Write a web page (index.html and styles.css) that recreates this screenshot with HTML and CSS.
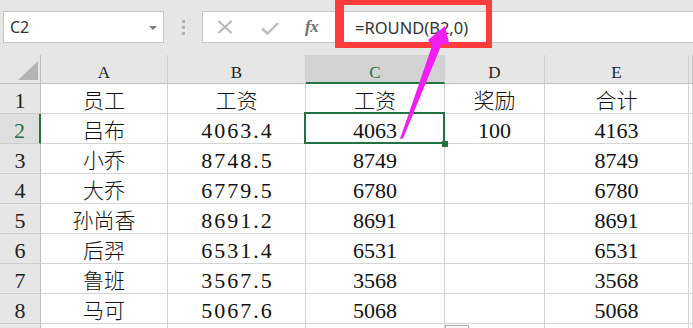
FILE: index.html
```html
<!DOCTYPE html>
<html lang="zh-CN">
<head>
<meta charset="utf-8">
<title>Excel ROUND</title>
<link rel="stylesheet" href="styles.css">
</head>
<body>
<div class="app">
  <div class="toolbar">
    <div class="namebox"><span class="ref">C2</span><span class="caret"></span></div>
    <div class="grip"><i></i><i></i><i></i></div>
    <div class="fbar">
      <svg class="ico-x" width="16" height="14" viewBox="0 0 16 14"><path d="M1.5 1 L14.5 13 M14.5 1 L1.5 13" stroke="#b4b4b4" stroke-width="1.8" fill="none"/></svg>
      <svg class="ico-ok" width="18" height="13" viewBox="0 0 18 13"><path d="M1 6.5 L6.5 11.5 L17 1" stroke="#bcbcbc" stroke-width="2.4" fill="none"/></svg>
      <span class="ico-fx">fx</span>
      <span class="formula">=ROUND(B2,0)</span>
    </div>
  </div>

  <div class="sheet">
    <div class="hd corner"><span class="tri"></span></div>
    <div class="hd col">A</div>
    <div class="hd col">B</div>
    <div class="hd col sel">C</div>
    <div class="hd col">D</div>
    <div class="hd col">E</div>
    <div class="hd col"></div>

    <div class="hd row">1</div>
    <div class="c zh">员工</div><div class="c zh">工资</div><div class="c zh">工资</div><div class="c zh">奖励</div><div class="c zh">合计</div><div class="c"></div>

    <div class="hd row sel">2</div>
    <div class="c zh">吕布</div><div class="c mono">4063.4</div><div class="c num active">4063</div><div class="c num">100</div><div class="c num">4163</div><div class="c"></div>

    <div class="hd row">3</div>
    <div class="c zh">小乔</div><div class="c mono">8748.5</div><div class="c num">8749</div><div class="c"></div><div class="c num">8749</div><div class="c"></div>

    <div class="hd row">4</div>
    <div class="c zh">大乔</div><div class="c mono">6779.5</div><div class="c num">6780</div><div class="c"></div><div class="c num">6780</div><div class="c"></div>

    <div class="hd row">5</div>
    <div class="c zh">孙尚香</div><div class="c mono">8691.2</div><div class="c num">8691</div><div class="c"></div><div class="c num">8691</div><div class="c"></div>

    <div class="hd row">6</div>
    <div class="c zh">后羿</div><div class="c mono">6531.4</div><div class="c num">6531</div><div class="c"></div><div class="c num">6531</div><div class="c"></div>

    <div class="hd row">7</div>
    <div class="c zh">鲁班</div><div class="c mono">3567.5</div><div class="c num">3568</div><div class="c"></div><div class="c num">3568</div><div class="c"></div>

    <div class="hd row">8</div>
    <div class="c zh">马可</div><div class="c mono">5067.6</div><div class="c num">5068</div><div class="c"></div><div class="c num">5068</div><div class="c"></div>

    <div class="hd row"></div>
    <div class="c"></div><div class="c"></div><div class="c"></div><div class="c"></div><div class="c"></div><div class="c"></div>
  </div>

  <div class="redbox"></div>
  <div class="autofill"></div>
  <svg class="arrow" width="693" height="328" viewBox="0 0 693 328">
    <polygon points="445,26 449.5,45 442,43.5 403,138.5 400,139 432,46 428,40" fill="#f01ef0"/>
  </svg>
</div>
</body>
</html>
```

FILE: styles.css
```css
html, body {
  margin: 0;
  padding: 0;
  background: #ffffff;
  overflow: hidden;
}

.app {
  position: relative;
  width: 693px;
  height: 328px;
  overflow: hidden;
}

/* ---------- toolbar ---------- */
.toolbar {
  height: 55px;
  box-sizing: border-box;
  background: #e6e6e6;
  display: flex;
  align-items: flex-start;
  padding-top: 11px;
}

.namebox {
  margin-left: 3px;
  width: 161px;
  height: 32px;
  box-sizing: border-box;
  background: #ffffff;
  border: 1px solid #c6c6c6;
  display: flex;
  align-items: center;
  justify-content: space-between;
  padding: 0 6px 0 6px;
  font-family: "Noto Sans", "Open Sans", sans-serif;
  font-size: 16px;
  color: #333333;
}

.caret {
  width: 0;
  height: 0;
  border-left: 4px solid transparent;
  border-right: 4px solid transparent;
  border-top: 4px solid #7a7a7a;
  margin-top: 1px;
}

.grip {
  margin-left: 18px;
  padding-top: 9px;
  display: flex;
  flex-direction: column;
  gap: 3px;
}

.grip i {
  display: block;
  width: 3px;
  height: 3px;
  background: #b0b0b0;
}

.fbar {
  margin-left: 17px;
  flex: 1;
  height: 32px;
  box-sizing: border-box;
  background: #ffffff;
  border: 1px solid #c6c6c6;
  border-right: none;
  display: flex;
  align-items: center;
}

.ico-x {
  margin-left: 14px;
  flex: none;
}

.ico-ok {
  margin-left: 28px;
  margin-top: 2px;
  flex: none;
}

.ico-fx {
  margin-left: 26px;
  width: 18px;
  font-family: "Liberation Serif", serif;
  font-style: italic;
  font-weight: bold;
  font-size: 17px;
  color: #6e6e6e;
  letter-spacing: -0.5px;
}

.formula {
  margin-left: 32px;
  font-family: "Noto Sans", "Open Sans", sans-serif;
  font-size: 16.5px;
  color: #333333;
}

/* ---------- sheet ---------- */
.sheet {
  display: grid;
  grid-template-columns: 41px 127px 138px 139px 100px 144px 1fr;
  grid-template-rows: 29px repeat(9, 30px);
}

.hd, .c {
  box-sizing: border-box;
  border-right: 1px solid #d4d4d4;
  border-bottom: 1px solid #d4d4d4;
  display: flex;
  justify-content: center;
  align-items: flex-start;
  white-space: nowrap;
}

.hd {
  background: #e6e6e6;
  color: #222222;
  font-family: "Liberation Serif", serif;
  border-color: #cdcdcd;
}

.hd.col {
  font-size: 17px;
  line-height: 22px;
  padding-top: 7px;
  border-bottom-color: #bfbfbf;
}

.hd.col.sel {
  background: #d2d2d2;
  color: #217346;
  border-bottom: 2px solid #217346;
}

.hd.row {
  font-size: 22px;
  line-height: 22px;
  padding-top: 6px;
  border-right-color: #bfbfbf;
}

.hd.row.sel {
  background: #dedede;
  color: #217346;
  border-right: 2px solid #217346;
}

.hd.corner {
  justify-content: flex-end;
  align-items: flex-end;
  padding: 0 2px 3px 0;
  border-bottom-color: #bfbfbf;
  border-right-color: #bfbfbf;
}

.tri {
  display: block;
  width: 20px;
  height: 19px;
  background: #b4b4b4;
  clip-path: polygon(100% 0, 100% 100%, 0 100%);
}

.c {
  background: #ffffff;
  color: #111111;
}

.zh {
  font-family: "Noto Sans CJK SC", sans-serif;
  font-size: 21px;
  font-weight: 300;
  line-height: 22px;
  padding-top: 4px;
}

.num {
  font-family: "Liberation Serif", serif;
  font-size: 22px;
  line-height: 22px;
  padding-top: 6px;
}

.mono {
  font-family: "Liberation Serif", serif;
  font-size: 22px;
  line-height: 22px;
  padding-top: 6px;
  letter-spacing: 2px;
  padding-left: 2px;
}

.active {
  position: relative;
}

.active::after {
  content: "";
  position: absolute;
  left: -2px;
  top: -2px;
  right: -1px;
  bottom: -1px;
  border: 2px solid #217346;
}

.active::before {
  content: "";
  position: absolute;
  right: -4px;
  bottom: -4px;
  width: 6px;
  height: 6px;
  background: #217346;
  z-index: 1;
}

/* ---------- overlays ---------- */
.redbox {
  position: absolute;
  left: 335px;
  top: 0;
  width: 157px;
  height: 48px;
  box-sizing: border-box;
  border: 6px solid #ff3b3b;
  border-top-width: 5px;
  border-left-width: 9px;
}

.autofill {
  position: absolute;
  left: 445px;
  top: 325px;
  width: 24px;
  height: 10px;
  box-sizing: border-box;
  border: 1px solid #acacac;
  background: #f7f7f7;
}

.arrow {
  position: absolute;
  left: 0;
  top: 0;
  pointer-events: none;
}
```
